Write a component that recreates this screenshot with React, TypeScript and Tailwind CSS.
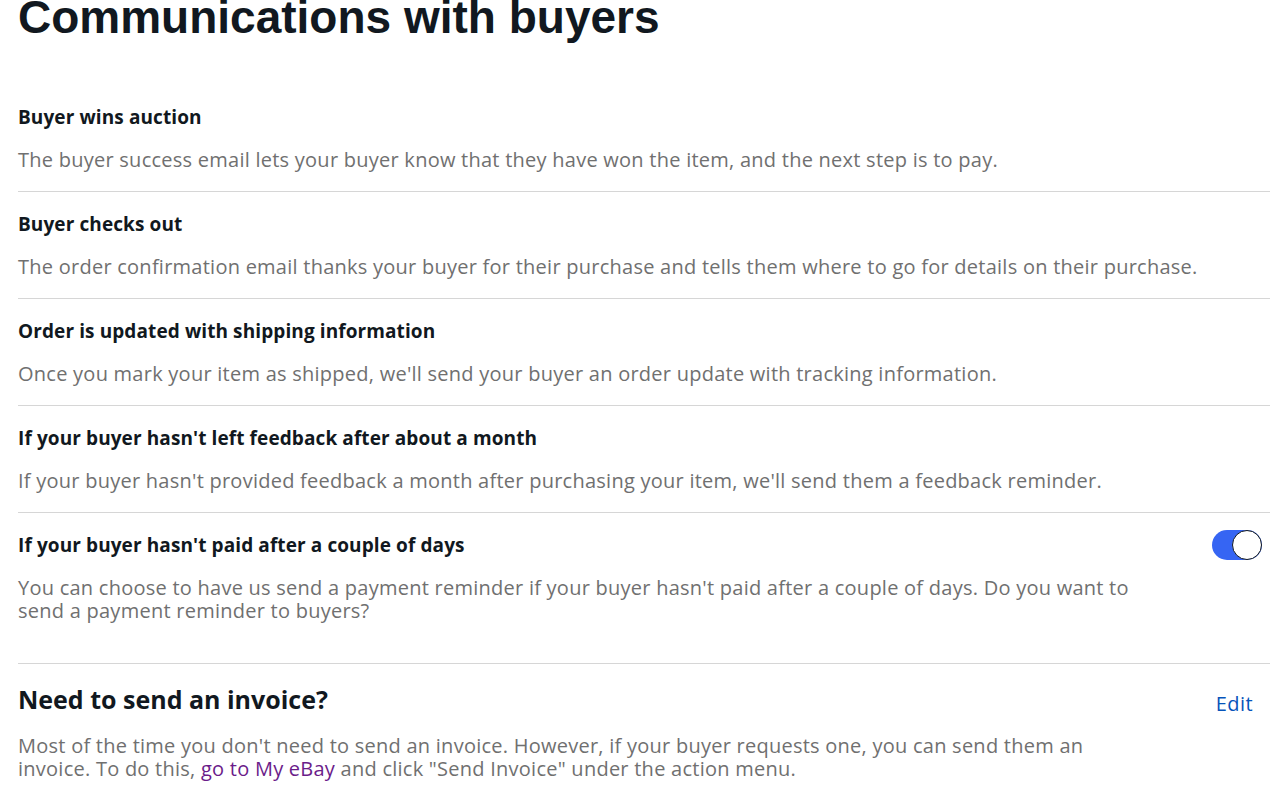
import React, { useState } from 'react';

const rows = [
  {
    title: 'Buyer wins auction',
    text: 'The buyer success email lets your buyer know that they have won the item, and the next step is to pay.',
  },
  {
    title: 'Buyer checks out',
    text: 'The order confirmation email thanks your buyer for their purchase and tells them where to go for details on their purchase.',
  },
  {
    title: 'Order is updated with shipping information',
    text: "Once you mark your item as shipped, we'll send your buyer an order update with tracking information.",
  },
  {
    title: "If your buyer hasn't left feedback after about a month",
    text: "If your buyer hasn't provided feedback a month after purchasing your item, we'll send them a feedback reminder.",
  },
];

const App = () => {
  const [reminder, setReminder] = useState(true);

  return (
    <div className="min-h-screen bg-white overflow-hidden font-['Open_Sans',sans-serif] text-[#111820]">
      <div className="pl-[18px]">
        <h1 className="-mt-[6px] font-['Liberation_Sans',Arial,sans-serif] text-[46px] leading-[46px] font-bold">
          Communications with buyers
        </h1>

        <div className="mt-[45px]">
          {rows.map((row, i) => (
            <div key={row.title} className={`pt-[20px] pb-[20px] ${i > 0 ? 'border-t border-[#d6d6d6]' : ''}`}>
              <h3 className="text-[19px] leading-[24px] font-bold tracking-[0.1px]">{row.title}</h3>
              <p className="mt-[19px] text-[20px] leading-[23px] tracking-[0.25px] text-[#707070]">{row.text}</p>
            </div>
          ))}

          <div className="pt-[20px] pb-[41px] border-t border-[#d6d6d6] flex items-start justify-between">
            <div className="max-w-[1140px]">
              <h3 className="text-[19px] leading-[24px] font-bold tracking-[0.1px]">
                If your buyer hasn't paid after a couple of days
              </h3>
              <p className="mt-[19px] text-[20px] leading-[23px] tracking-[0.25px] text-[#707070]">
                You can choose to have us send a payment reminder if your buyer hasn't paid after a couple of days. Do you want to send a payment reminder to buyers?
              </p>
            </div>
            <button
              onClick={() => setReminder(!reminder)}
              className={`mt-[-3px] mr-[8px] w-[50px] h-[30px] rounded-full relative shrink-0 ${reminder ? 'bg-[#3665f3]' : 'bg-[#c7c7c7]'}`}
            >
              <span
                className={`absolute top-0 w-[30px] h-[30px] rounded-full bg-white border border-[#111820] ${reminder ? 'right-0' : 'left-0'}`}
              />
            </button>
          </div>
        </div>

        <div className="border-t border-[#d6d6d6] pt-[20px] flex items-start justify-between">
          <div className="max-w-[1090px]">
            <h2 className="text-[25px] leading-[30px] font-bold">Need to send an invoice?</h2>
            <p className="mt-[20px] text-[20px] leading-[23px] tracking-[0.25px] text-[#707070]">
              Most of the time you don't need to send an invoice. However, if your buyer requests one, you can send them an invoice. To do this,{' '}
              <a href="#" className="text-[#6b1c8a]">go to My eBay</a> and click "Send Invoice" under the action menu.
            </p>
          </div>
          <button className="mt-[8px] mr-[17px] text-[20px] leading-[24px] tracking-[0.4px] text-[#0654ba]">Edit</button>
        </div>
      </div>
    </div>
  );
};

export default App;
